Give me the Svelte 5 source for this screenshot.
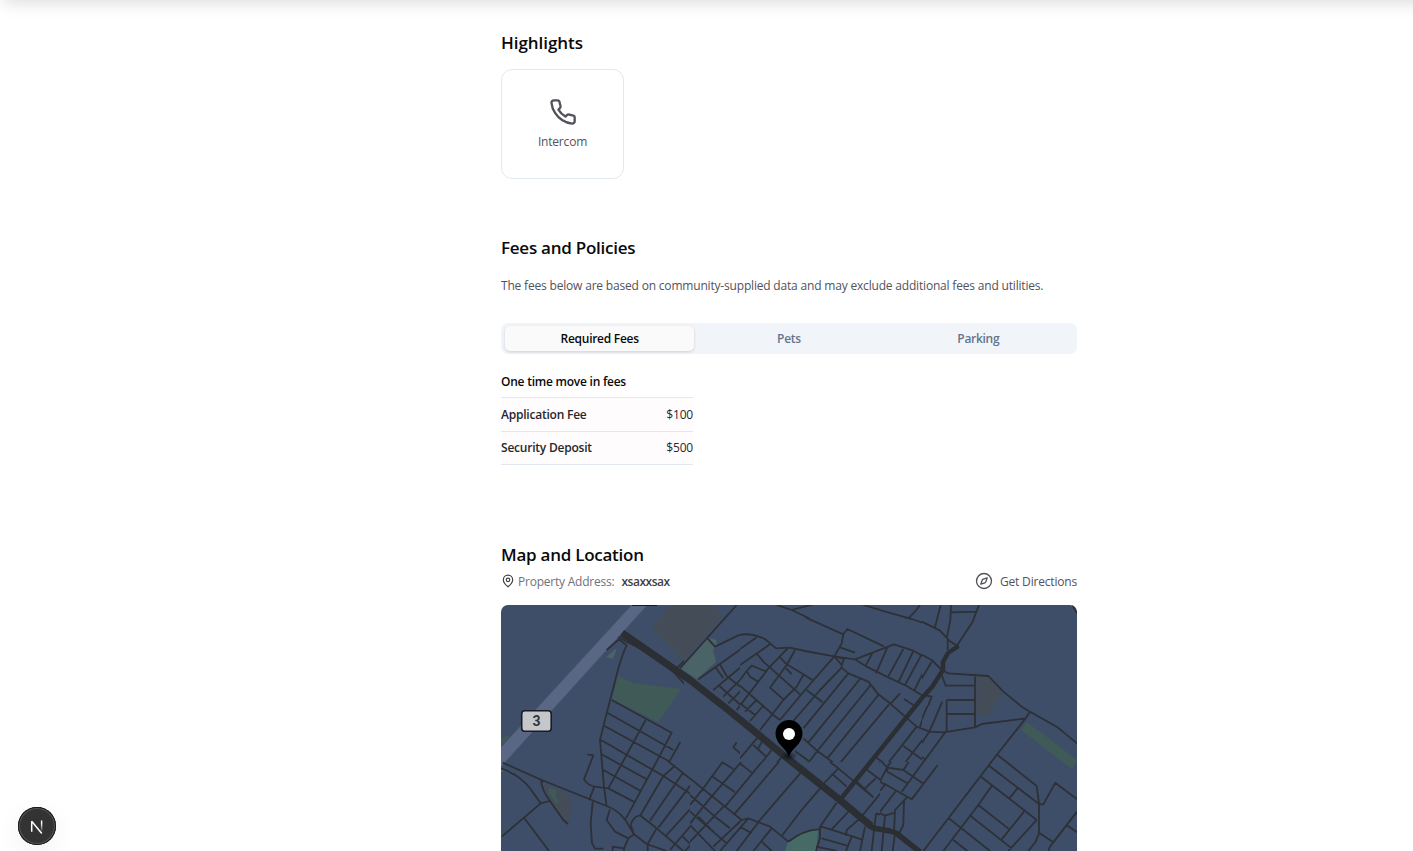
<script>
  const fees = [
    { name: 'Application Fee', price: '$100' },
    { name: 'Security Deposit', price: '$500' }
  ];

  // Street tiles: x, y is the origin of the path units (three per pixel);
  // box is the part of the map the tile covers: left, top, right, bottom.
  const tiles = [
    { x: 490, y: 540, box: [501, 605, 684, 690], d: 'M385 297L410 316Q388 360 362 480M385 290L410 305 470 335 545 390 583 432M350 330L388 297M560 385L600 345' },
    { x: 680, y: 600, box: [680, 605, 880, 720], d: 'M170 15L0 205M80 112L105 140 175 106Q200 98 225 106L258 118 288 143 325 142 375 152 465 168 525 180 600 145M290 15L335 30 488 103 485 125 465 168M335 30L400 13M550 15L600 30M488 103L502 88 600 133M483 142L525 157M235 110L55 238M268 130L100 270M325 142L265 208 210 280 170 330M105 200L130 235M118 190L140 228L275 335 300 365M115 255L215 345M215 200L185 235 130 290M190 265L145 310M225 290L190 345M245 310L210 358' },
    { x: 880, y: 570, box: [880, 605, 1077, 706], d: 'M0 120L130 157 180 182 208 212 232 228M120 105L105 125 85 145M182 105L165 172M213 105L211 150 200 205M203 205V240M213 127L290 125M297 105L278 155 232 225M0 235L42 222 105 243 155 270 185 300M185 300L205 310 325 318 370 365 425 410 450 425 500 450M285 315V450M185 315L197 347H285M200 390H285M200 390V450M200 432H285M25 230L0 285M72 237L22 325M102 245L52 337M122 255L77 347M155 275L103 362M0 318L75 348 130 380M130 375L155 380 128 450M187 395L162 450M578 105L591 130' },
    { x: 500, y: 690, box: [501, 690, 690, 851], d: 'M338 0L315 90 300 150 312 290 320 350M8 218L125 270 320 348Q350 358 375 388L402 433 440 462 500 483M3 235Q60 255 90 295L122 340 148 333M122 340L72 383 5 440M72 383L147 483M123 270Q125 300 150 333L190 390 204 402M262 193L280 196 252 268Q262 285 285 290L325 295 405 337M283 290L268 328M278 335L272 400 276 460 285 476 310 476M330 358L320 390 345 425 385 445 372 475 338 470 338 483M385 445L402 433M372 475V483M335 30L515 128 475 205 378 385M322 68L520 180M312 107L500 210 600 290M303 150L490 258 600 330M305 193L440 268M310 240L422 303M437 90L325 295M541 156L508 215M522 230L490 258 420 378M548 250L450 392M580 275L475 413M600 325L497 438M392 405Q400 378 420 376L470 415 550 483M392 405L402 433M600 375L510 480M572 410L600 435M548 440L590 480M470 415L443 462 443 483M600 435L555 483' },
    { x: 690, y: 710, box: [690, 720, 880, 851], d: 'M345 155L350 148M410 148L430 120M380 125L445 175 550 262M310 125L355 155 380 125M445 175L400 222M425 190L470 230M280 140L135 310M335 185L210 330M395 230L335 300 275 378M245 120L105 290M440 278L390 350M140 97L130 112 160 138M190 100L150 160 60 265 0 340M190 105L225 135 245 115M215 90L205 120M150 160L185 188M97 157L130 177M97 157L40 235 0 285M68 200L135 247M0 205L155 330 175 325 240 350 295 395M155 330L70 410M175 325L90 423M210 330L140 423M245 355L190 423M0 255L75 320 120 355M0 305L110 400M25 320L70 365M0 345L75 423M105 285L0 395M150 350L185 370M215 395L245 423M295 395Q340 360 385 358L395 350 515 388M390 350V385L378 423M395 385L475 408M485 380L468 423M525 350L510 423M480 300L425 358M510 325L470 360 468 378M378 410L440 423M555 145L600 178M525 175L575 213 600 225M600 165L595 185M495 210L550 262M557 205L520 240M600 215L510 325M558 310L545 423M558 310L585 318V423M585 318L600 312' },
    { x: 880, y: 700, box: [880, 706, 1077, 851], d: 'M200 0V92M200 2H285M200 42H285M285 0V82M20 0L75 50 110 80 148 95 190 97 285 82 305 72 437 55 450 35M400 0L425 20 450 35 530 80 591 130M437 55L350 165 130 453M150 0L115 82 22 200 0 245M187 5L148 95 70 210M197 95L65 275M72 140L135 177M0 180L22 203 70 210 128 250M22 203V215L82 250M173 195L95 298 10 250M50 270L0 335M80 293L45 330 42 400M72 300L70 375 55 405M0 340L15 347 45 338M15 347L5 453M45 400L38 453M0 245L15 255 0 272M75 0L100 18M0 35L30 5M353 165L470 258 477 310V400L467 425 445 453M328 198L477 312 490 313 526 248 565 278 591 297M303 230L470 360M412 265L388 295M335 258L295 315 190 453M295 315L388 388M268 345L395 445M432 335L365 418M470 360L385 453M207 355L330 453M220 420L262 453M591 335L510 440 505 453M560 375L591 397M477 398L520 427' },
    { x: 740, y: 615, box: [740, 618, 922, 762], d: 'M180 0L310 58 305 85 283 124M310 58L322 42 432 94M300 97L345 113M0 60Q30 52 75 72L108 100 150 98 195 108 283 124 345 133 462 88 520 107 570 135M465 0L525 15 570 32M500 8L512 0M50 67L0 102M90 88L0 150M50 115L70 140 113 178 180 238M145 98L85 160 78 170 5 265M165 105L140 150 90 218 130 253M118 125L140 148 190 178 217 195M190 180L170 215 130 255 60 345M138 160L155 177M20 168L35 152 80 170M20 168L30 185 55 200M20 168L0 195M283 124L195 225 120 315M305 158L240 225 160 318M200 225L248 262M283 124L305 150V158L325 175 385 200 415 238 450 265 530 335 570 350M285 124L312 132 305 150M325 175L190 340M360 192L205 382M392 210L232 408M415 240L262 430M447 268L295 450M345 133L380 155 440 185 500 213 550 243M397 115L375 155M442 97L408 175M490 102L443 188M520 108L475 202M543 122L495 210M568 135L522 228M480 235L450 268M492 252L520 270M0 212L100 300 120 315M0 265L45 300M50 255L15 290M72 270L30 318M190 370L232 408 290 450M232 408L200 450M165 408L205 437M130 420L105 450M570 250L540 335M530 335L440 450M570 345L490 450M490 393L570 450M405 425L440 450M40 390L78 425M70 372L55 400M55 365L0 430M95 405L60 450' }
  ];
</script>

<div class="page">
  <div class="topbar"></div>
  <main>
    <section class="highlights">
      <h2 class="wide">Highlights</h2>
      <div class="card">
        <svg width="28" height="28" viewBox="0 0 24 24" fill="none" stroke="currentColor" stroke-width="2" stroke-linecap="round" stroke-linejoin="round">
          <path d="M22 16.92v3a2 2 0 0 1-2.18 2 19.79 19.79 0 0 1-8.63-3.07 19.5 19.5 0 0 1-6-6 19.79 19.79 0 0 1-3.07-8.67A2 2 0 0 1 4.11 2h3a2 2 0 0 1 2 1.72 12.84 12.84 0 0 0 .7 2.81 2 2 0 0 1-.45 2.11L8.09 9.91a16 16 0 0 0 6 6l1.27-1.27a2 2 0 0 1 2.11-.45 12.84 12.84 0 0 0 2.81.7A2 2 0 0 1 22 16.92z" />
        </svg>
        <span>Intercom</span>
      </div>
    </section>

    <section class="policies">
      <h2>Fees and Policies</h2>
      <p>The fees below are based on community-supplied data and may exclude additional fees and utilities.</p>
      <div class="tabs">
        <button class="active">Required Fees</button>
        <button>Pets</button>
        <button>Parking</button>
      </div>
      <div class="fees">
        <h3>One time move in fees</h3>
        {#each fees as fee}
          <div class="fee"><b>{fee.name}</b><span>{fee.price}</span></div>
        {/each}
      </div>
    </section>

    <section class="location">
      <h2>Map and Location</h2>
      <div class="address">
        <svg class="pin" width="14" height="14" viewBox="0 0 24 24" fill="none" stroke="currentColor" stroke-width="2" stroke-linecap="round" stroke-linejoin="round">
          <path d="M20 10c0 6-8 12-8 12s-8-6-8-12a8 8 0 0 1 16 0Z" /><circle cx="12" cy="10" r="3" />
        </svg>
        <span class="label">Property Address:</span>
        <b>xsaxxsax</b>
        <a class="directions" href="#map">
          <svg width="18" height="18" viewBox="0 0 24 24" fill="none" stroke="currentColor" stroke-width="1.8" stroke-linecap="round" stroke-linejoin="round">
            <circle cx="12" cy="12" r="10" /><path d="m16.24 7.76-1.8 5.41a2 2 0 0 1-1.27 1.27l-5.41 1.8 1.8-5.41a2 2 0 0 1 1.27-1.27z" />
          </svg>
          <span>Get Directions</span>
        </a>
      </div>
      <div class="map" id="map">
        <svg width="576" height="260" viewBox="501 605 576 260">
          <defs>
            <radialGradient id="pinShade"><stop offset="0" stop-color="#000" stop-opacity=".55" /><stop offset="1" stop-color="#000" stop-opacity="0" /></radialGradient>
          </defs>
          <rect x="501" y="605" width="576" height="260" fill="#3e4e68" />
          <path fill="#444d57" d="M672 605L663 612 661 618 655 621 653 630 683 661 723 617 712 605ZM976.500 676H988L1003 694 987 716H976.500ZM542 782L572 797 569 824 565 822 550 801Z" />
          <path fill="#4a6367" d="M680 668L706.500 637 716 640 717 645 713 650 716 662 697 679ZM606 657L617 648 613 659ZM501 769L505 770 501 773Z" />
          <path fill="#405a57" d="M618 676L633 683 681 689 658 722 612 699ZM1027 722L1077 760 1072 769 1021 730ZM501 739L507 735 509 737 501 746ZM549 788L557 790 555 795 559 802 556 803 549 793Z" />
          <path fill="#466b66" d="M788 841.700Q803 830 818.300 829.500L816 851H785Z" />
          <path d="M631.500 605H647.500L501 767V747Z" fill="#596784" />
          <path d="M631.500 605L501 747M647.500 605L501 767" fill="none" stroke="#46536c" stroke-width="1" />
          <path d="M632 605.200H657" stroke="#17191d" stroke-width="1.500" />
          {#each tiles as { x, y, box: [l, t, r, b], d }, i}
            <svg x={l} y={t} width={r - l} height={b - t} viewBox="{(l - x) * 3} {(t - y) * 3} {(r - l) * 3} {(b - t) * 3}" overflow="hidden">
              {#if i === tiles.length - 1}
                <rect width="600" height="500" fill="#3e4e68" />
              {/if}
              <path class="street" {d} />
            </svg>
          {/each}
          <path class="main-road" d="M622 633L690 680 727 709 787 758 840 800 871 826" />
          <path class="main-road end" d="M868 824L873 828 890 831 896 833 920 852" />
          <path class="second-road" d="M957 647L948 653 943 662 943 670 932 687 922 698 840 800" />
          <rect x="521.700" y="710.800" width="29.500" height="20.400" rx="3" fill="#c5c7ca" stroke="#171b24" stroke-width="1.600" />
          <text x="536.400" y="726" text-anchor="middle">3</text>
          <ellipse cx="789" cy="756" rx="9" ry="5" fill="url(#pinShade)" />
          <path d="M789 756.500C786 748 775.500 744 775.500 733.500A13.500 13.500 0 0 1 802.500 733.500C802.500 744 792 748 789 756.500Z" fill="#000" />
          <circle cx="789" cy="734" r="6" fill="#fff" />
        </svg>
      </div>
    </section>
  </main>

  <button class="dev" aria-label="Developer tools">
    <svg width="38" height="38" viewBox="0 0 38 38" fill="none">
      <defs><linearGradient id="fade" x1="0" y1="13" x2="0" y2="25" gradientUnits="userSpaceOnUse"><stop offset=".3" stop-color="#fff" /><stop offset="1" stop-color="#fff" stop-opacity="0" /></linearGradient></defs>
      <path d="M13.700 24.700V14.200L23.800 26.400" stroke="#fff" stroke-width="1.500" stroke-linejoin="bevel" />
      <rect x="22.900" y="13.500" width="1.400" height="11" fill="url(#fade)" />
    </svg>
  </button>
</div>

<style>
  :global(body) { margin: 0; background: #fff; }
  .page { height: 851px; overflow: hidden; position: relative; font-family: "Open Sans", "Noto Sans", sans-serif; font-size: 12px; letter-spacing: -.185px; color: #09090b; }
  .topbar { height: 60px; margin: -60px -30px 0 0; box-shadow: 0 4px 18px -3px rgba(0, 0, 0, .17); }
  main { width: 576px; margin-left: 501px; padding-top: 30px; }
  h2 { margin: 0; font-size: 17px; line-height: 25px; font-weight: 600; letter-spacing: -.25px; }
  .wide { letter-spacing: -.05px; }
  .highlights { height: 205px; }
  .card { box-sizing: border-box; width: 123px; height: 110px; margin-top: 14px; border: 1px solid #e2e8f0; border-radius: 11px; display: flex; flex-direction: column; align-items: center; padding-top: 28px; color: #52525b; }
  .card span { line-height: 18px; margin-top: 7px; }
  .policies { height: 307px; }
  p { margin: 16px 0 0; line-height: 20px; color: #52525b; white-space: nowrap; }
  .tabs { box-sizing: border-box; height: 31px; margin-top: 27px; padding: 3px 4px; display: grid; grid-template-columns: repeat(3, 1fr); background: #f1f5f9; border-radius: 7px; }
  button { border: 0; padding: 0; background: none; font: 600 12px/25px "Open Sans", sans-serif; letter-spacing: -.28px; color: #64748b; }
  .tabs .active { background: #fafafa; color: #09090b; border-radius: 5px; box-shadow: 0 1px 3px rgba(0, 0, 0, .15); }
  .fees { width: 192px; margin-top: 18px; }
  h3 { margin: 0; font-size: 12px; line-height: 20px; height: 25px; font-weight: 600; letter-spacing: -.24px; }
  .fee { box-sizing: border-box; height: 34px; border-top: 1px solid #e2e8f0; background: #fffcfd; display: flex; justify-content: space-between; align-items: center; line-height: 17px; color: #27272a; }
  .fee:last-child { border-bottom: 1px solid #e2e8f0; line-height: 18px; }
  .fee b { letter-spacing: -.22px; }
  b { font-weight: 600; }
  .address { display: flex; align-items: center; height: 18px; margin-top: 5px; color: #3f3f46; }
  .address b { letter-spacing: -.5px; }
  .label { margin: 0 7px 0 3px; color: #71717a; letter-spacing: -.22px; }
  .directions { margin-left: auto; display: flex; align-items: center; gap: 7px; color: #52525b; text-decoration: none; }
  .map { height: 260px; margin-top: 15px; border-radius: 7px; overflow: hidden; }
  .map svg { display: block; }
  .map text { font: 700 14px Roboto, sans-serif; fill: #30343b; }
  .street { fill: none; stroke: #2d3036; stroke-width: 5.4; stroke-linejoin: round; }
  .main-road { fill: none; stroke: #2b2f34; stroke-width: 7.2; stroke-linejoin: round; }
  .end { stroke-width: 5.5; }
  .second-road { fill: none; stroke: #2b2f34; stroke-width: 4.5; stroke-linecap: round; stroke-linejoin: round; }
  .dev { position: absolute; left: 18px; top: 807px; width: 38px; height: 38px; border-radius: 50%; background: #333; box-shadow: inset 0 0 0 1px #171717, inset 0 0 0 2px #555, 0 8px 28px rgba(0, 0, 0, .06); }
  .dev svg { display: block; }
</style>
